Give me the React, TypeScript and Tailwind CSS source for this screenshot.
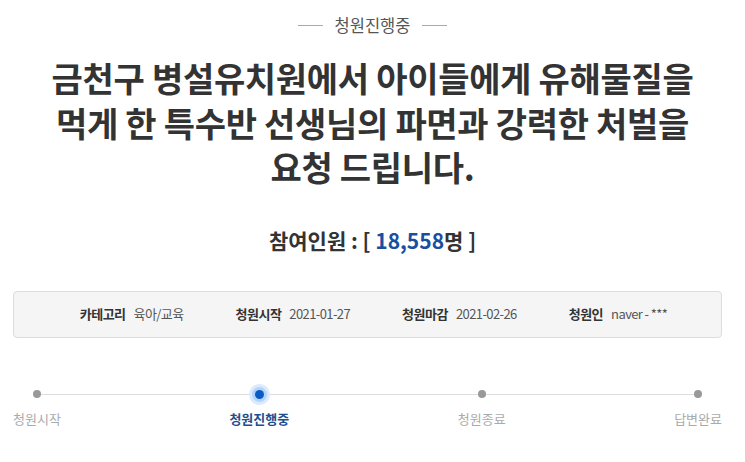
const font = { fontFamily: '"Noto Sans CJK KR", "Noto Sans", sans-serif' };

const steps = [
  { label: "청원시작", active: false },
  { label: "청원진행중", active: true },
  { label: "청원종료", active: false },
  { label: "답변완료", active: false },
];

function InfoItem({ label, value }: { label: string; value: string }) {
  return (
    <div className="flex items-center gap-[8px]">
      <span className="font-bold text-[#333] tracking-[-0.5px]">{label}</span>
      <span className="text-[#555] tracking-[-0.6px]">{value}</span>
    </div>
  );
}

export default function App() {
  return (
    <div className="w-[745px] h-[462px] bg-white overflow-hidden" style={font}>
      <div className="pt-[15px] flex items-center justify-center gap-3">
        <span className="w-[25px] h-px bg-[#aaa]" />
        <span className="text-[16.5px] leading-5 text-[#555]">청원진행중</span>
        <span className="w-[25px] h-px bg-[#aaa]" />
      </div>

      <h1 className="mt-[21px] text-center text-[34px] leading-[44.5px] font-bold text-[#333] tracking-[-0.3px]">
        금천구 병설유치원에서 아이들에게 유해물질을
        <br />
        먹게 한 특수반 선생님의 파면과 강력한 처벌을
        <br />
        요청 드립니다.
      </h1>

      <p className="mt-[36px] text-center text-[21px] leading-7 font-bold text-[#333]">
        참여인원 : [ <span className="text-[#1a4e9f]">18,558</span>명 ]
      </p>

      <div className="mt-[37px] mx-[13px] w-[709px] h-[47px] rounded border border-[#ddd] bg-[#f5f5f5] flex items-center justify-center gap-[52px] text-[13px] pl-[12px]">
        <InfoItem label="카테고리" value="육아/교육" />
        <InfoItem label="청원시작" value="2021-01-27" />
        <InfoItem label="청원마감" value="2021-02-26" />
        <InfoItem label="청원인" value="naver - ***" />
      </div>

      <div className="relative mt-[46px] mx-[13px] w-[709px] flex justify-between">
        <div className="absolute left-[22px] right-[24px] top-[10px] h-px bg-[#ddd]" />
        {steps.map((s) => (
          <div key={s.label} className="relative flex flex-col items-center">
            <div className="h-[21px] flex items-center justify-center">
              {s.active ? (
                <span className="w-[21px] h-[21px] rounded-full bg-[#dbeafe] flex items-center justify-center">
                  <span className="w-[15px] h-[15px] rounded-full bg-[#b3d4fb] flex items-center justify-center">
                    <span className="w-[9px] h-[9px] rounded-full bg-[#0b5bc4]" />
                  </span>
                </span>
              ) : (
                <span className="w-[8px] h-[8px] rounded-full bg-[#999]" />
              )}
            </div>
            <span
              className={
                s.active
                  ? "mt-[4px] text-[13px] leading-5 font-bold text-[#1d4f91]"
                  : "mt-[4px] text-[13px] leading-5 text-[#aaa]"
              }
            >
              {s.label}
            </span>
          </div>
        ))}
      </div>
    </div>
  );
}
